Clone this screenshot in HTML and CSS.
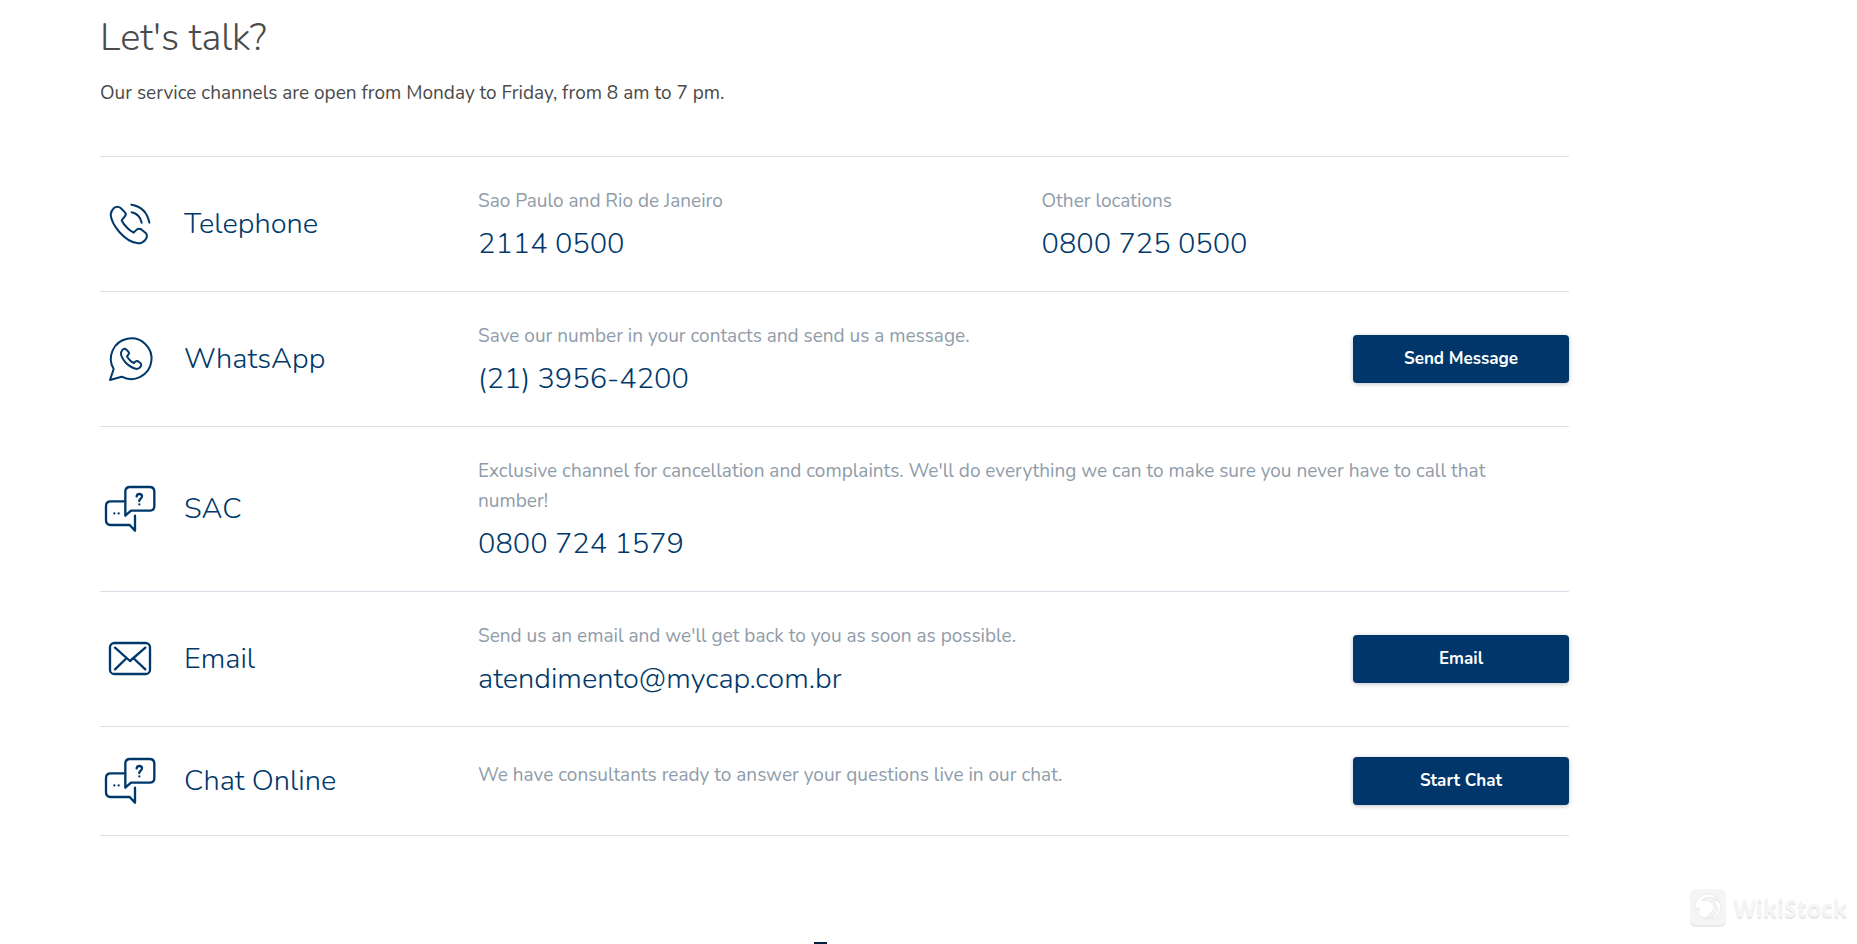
FILE: index.html
```html
<!DOCTYPE html>
<html lang="en">
<head>
<meta charset="utf-8">
<title>Let's talk?</title>
<link rel="stylesheet" href="styles.css">
</head>
<body>
<svg class="symbols" aria-hidden="true">
  <symbol id="chat" viewBox="15 39 180 156">
    <path d="M91 137V65Q91 51 105 51H164Q178 51 178 65V108Q178 122 164 122H108Z"/>
    <path d="M88 94H47Q33 94 33 108V151Q33 165 47 165H104L120 182V137"/>
    <path d="M58 130h0M71 130h0M133 103h0"/>
    <path d="M125 79Q126 72 133 72Q141 72 141 79Q141 84 136 87Q133 89 133 93"/>
  </symbol>
</svg>
<main class="page">
  <header class="intro">
    <h1 class="intro-title">Let's talk?</h1>
    <p class="intro-text">Our service channels are open from Monday to Friday, from 8 am to 7 pm.</p>
  </header>
  <section class="channels">
    <article class="channel">
      <svg class="icon" viewBox="15 54 180 156" aria-hidden="true">
        <path d="M57 84Q67 76 77 84L90 97Q95 103 89 110L80 121Q84 131 97 144Q105 152 116 158L125 149Q132 143 140 149L153 160Q159 168 152 178Q143 190 129 190Q100 187 73 156Q49 128 47 104Q48 92 57 84Z"/>
        <path d="M110 97Q134 102 140 128M109 74Q154 81 163 128"/>
      </svg>
      <h2 class="name">Telephone</h2>
      <div class="body pair">
        <div><p class="label">Sao Paulo and Rio de Janeiro</p><p class="value">2114 0500</p></div>
        <div><p class="label">Other locations</p><p class="value">0800 725 0500</p></div>
      </div>
    </article>
    <article class="channel">
      <svg class="icon" viewBox="15 39 180 156" aria-hidden="true">
        <path d="M56 147A61 61 0 1 1 80 170L45 180Z"/>
        <path d="M82 90Q88 83 95 90L100 95Q104 100 100 104L96 109Q100 117 107 123Q111 127 117 129L121 125Q127 121 132 126L137 130Q141 135 137 140Q132 147 125 147Q109 144 93 129Q79 113 78 102Q78 95 82 90Z"/>
      </svg>
      <h2 class="name">WhatsApp</h2>
      <div class="body"><p class="label">Save our number in your contacts and send us a message.</p><p class="value">(21) 3956-4200</p></div>
      <button class="button" type="button">Send Message</button>
    </article>
    <article class="channel">
      <svg class="icon bold" aria-hidden="true"><use href="#chat"/></svg>
      <h2 class="name">SAC</h2>
      <div class="body wide"><p class="label">Exclusive channel for cancellation and complaints. We'll do everything we can to make sure you never have to call that number!</p><p class="value">0800 724 1579</p></div>
    </article>
    <article class="channel">
      <svg class="icon bold" viewBox="15 39 180 156" aria-hidden="true">
        <rect x="45" y="69" width="120" height="93" rx="13"/>
        <path d="M60 83L105 123L151 83M60 148L92 117M151 148L118 117"/>
      </svg>
      <h2 class="name">Email</h2>
      <div class="body"><p class="label">Send us an email and we'll get back to you as soon as possible.</p><p class="value">atendimento@mycap.com.br</p></div>
      <button class="button" type="button">Email</button>
    </article>
    <article class="channel">
      <svg class="icon bold" aria-hidden="true"><use href="#chat"/></svg>
      <h2 class="name">Chat Online</h2>
      <div class="body single"><p class="label">We have consultants ready to answer your questions live in our chat.</p></div>
      <button class="button" type="button">Start Chat</button>
    </article>
  </section>
  <div class="next"></div>
</main>
<div class="watermark">
  <svg class="mark" viewBox="0 0 36 38" aria-hidden="true">
    <rect class="mark-shade" y="2" width="36" height="36" rx="6"/>
    <rect class="mark-tile" width="36" height="36" rx="6"/>
    <path class="mark-bird" d="M5 20Q4 12 11 7Q19 2 26 8L29 12Q20 5 11 11L19 11L25 18L20 25Q17 27 19 30Q10 29 8 23L10 19Z"/>
    <path class="mark-bird" d="M28 11Q34 20 27 27Q22 31 16 28H23L28 21L24 12Z"/>
  </svg>
  <span>WikiStock</span>
</div>
</body>
</html>
```
FILE: styles.css
```css
* { box-sizing: border-box; }
body {
  margin: 0;
  background: #fff;
  color: #4a4a4a;
  font-family: Nunito, "Open Sans", sans-serif;
  font-size: 19px;
}
h1, h2, p { margin: 0; font-weight: 400; }
.symbols { position: absolute; width: 0; height: 0; }
.page { padding: 13px 288px 0 100px; }
.intro { padding-bottom: 48px; }
.intro-title { font-size: 38px; font-weight: 300; line-height: 50px; }
.intro-text { margin-top: 15px; line-height: 30px; }
.channels { border-top: 1px solid #d8dfe8; }
.channel {
  display: grid;
  grid-template-columns: 84px 294px 1fr 216px;
  align-items: center;
  padding: 27px 0;
  border-bottom: 1px solid #d8dfe8;
}
.icon {
  width: 60px;
  height: 54px;
  fill: none;
  stroke: #00386b;
  stroke-width: 6;
  stroke-linecap: round;
  stroke-linejoin: round;
}
.bold { stroke-width: 7; }
.name, .value { color: #00386b; font-size: 29px; font-weight: 300; line-height: 40px; }
.body { padding-top: 2px; }
.pair, .wide { grid-column: 3 / 5; }
.pair { display: grid; grid-template-columns: 1fr 1fr; gap: 36px; }
.wide { padding-right: 36px; }
.label { color: #8f9ca9; line-height: 30px; margin-bottom: 8px; }
.single { padding: 0 0 4px; }
.button {
  height: 48px;
  padding: 0 8px 2px;
  border: 0;
  border-radius: 4px;
  background: #003669;
  color: #fff;
  font: 700 17px Nunito, "Open Sans", sans-serif;
  box-shadow: 0 1px 4px rgba(0, 0, 0, 0.25);
}
.next { width: 13px; height: 2px; margin: 106px 0 0 714px; background: #00203f; }
.watermark {
  position: absolute;
  right: 10px;
  bottom: 17px;
  display: flex;
  align-items: center;
  gap: 7px;
  color: #f5f5f5;
  font: 700 23px/36px "Open Sans", sans-serif;
  text-shadow: 0 2px 1px #e6e6e6;
}
.mark { width: 36px; height: 38px; }
.mark-shade { fill: #e9e9e9; }
.mark-tile { fill: #f5f5f5; }
.mark-bird { fill: #fff; stroke: #eaeaea; }
```
